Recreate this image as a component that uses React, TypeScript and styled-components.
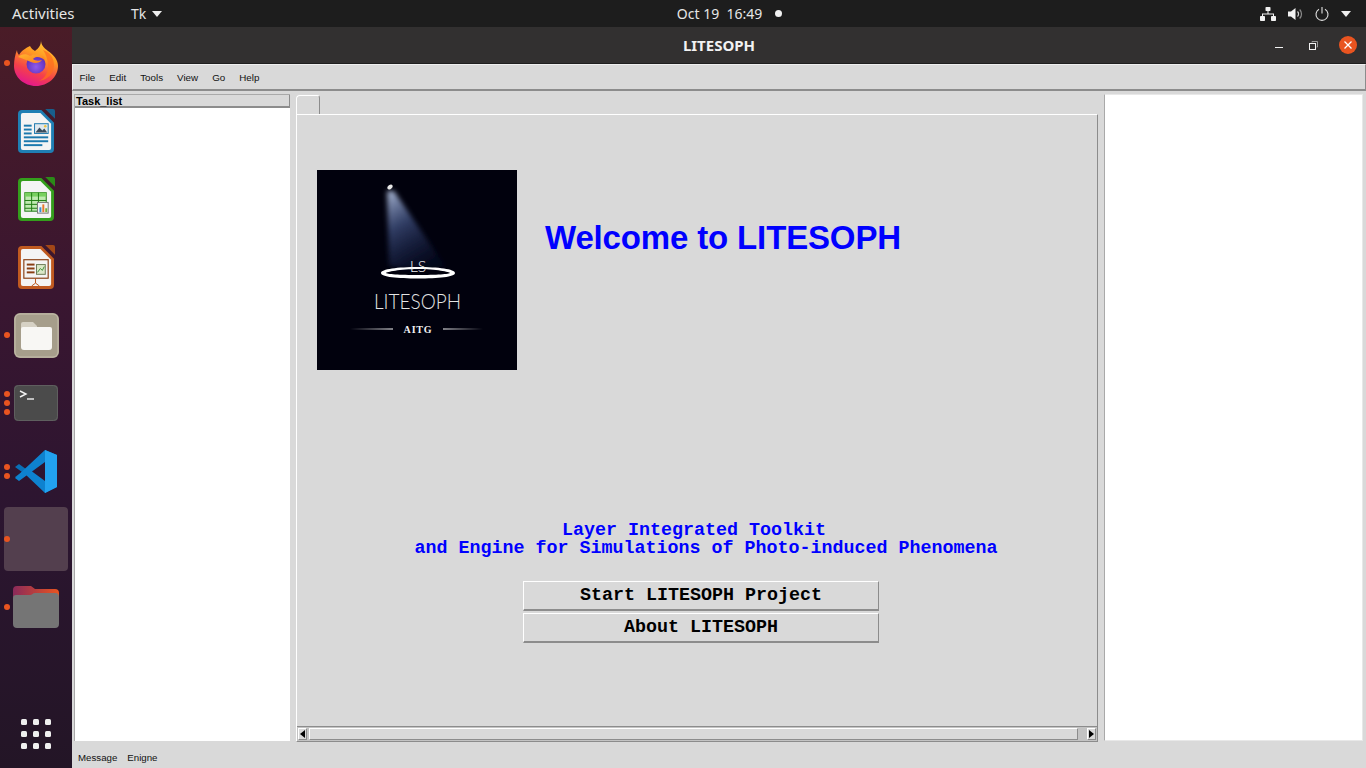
import React from "react";
import styled, { createGlobalStyle } from "styled-components";

const GlobalStyle = createGlobalStyle`
  html, body {
    margin: 0;
    padding: 0;
    width: 1366px;
    height: 768px;
    overflow: hidden;
    background: #d9d9d9;
  }
`;

const Screen = styled.div`
  width: 1366px;
  height: 768px;
  display: grid;
  grid-template-rows: 27px 1fr;
  font-family: "Liberation Sans", sans-serif;
`;

/* gnome top bar */
const TopBar = styled.header`
  background: #1d1d1d;
  color: #e6e6e6;
  display: grid;
  grid-template-columns: 1fr auto 1fr;
  align-items: center;
  font-family: "Noto Sans", sans-serif;
  font-size: 14px;
`;

const TopLeft = styled.div`
  display: flex;
  align-items: center;
  padding-left: 12px;
`;

const Activities = styled.span`
  width: 119px;
  margin-top: -1px;
  font-size: 15px;
`;

const AppMenu = styled.span`
  display: flex;
  align-items: center;
  gap: 6px;
`;

const Clock = styled.div`
  display: flex;
  align-items: center;
  gap: 13px;
  padding-left: 93px;
`;

const ClockDot = styled.span`
  width: 7px;
  height: 7px;
  border-radius: 50%;
  background: #f2f2f2;
`;

const TopRight = styled.div`
  display: flex;
  align-items: center;
  justify-content: flex-end;
  gap: 12px;
  padding-right: 15px;
`;

const Desktop = styled.div`
  display: flex;
  min-height: 0;
`;

/* dock */
const Dock = styled.nav`
  width: 72px;
  flex: none;
  display: flex;
  flex-direction: column;
  padding: 2px 0 19px;
  box-sizing: border-box;
  background: linear-gradient(180deg, #4a1c27 0%, #3a1630 35%, #2c1530 65%, #231526 100%);
`;

const DockItem = styled.div<{ $active?: boolean }>`
  position: relative;
  height: 68px;
  flex: none;
  display: flex;
  align-items: center;
  justify-content: center;
  &::before {
    content: "";
    display: ${(p) => (p.$active ? "block" : "none")};
    position: absolute;
    left: 4px;
    top: 2px;
    width: 64px;
    height: 64px;
    border-radius: 4px;
    background: #533f4e;
  }
`;

const DotStack = styled.div`
  position: absolute;
  left: 4px;
  top: 0;
  bottom: 0;
  display: flex;
  flex-direction: column;
  justify-content: center;
  gap: 3px;
`;

const Dot = styled.span`
  width: 6px;
  height: 6px;
  border-radius: 50%;
  background: #e95420;
`;

const AppGrid = styled.div`
  margin: auto 0 0 21px;
  display: grid;
  grid-template-columns: repeat(3, 6px);
  gap: 6px;
`;

const AppGridDot = styled.span`
  width: 6px;
  height: 6px;
  border-radius: 1.5px;
  background: #efefef;
`;

/* tk window */
const Window = styled.div`
  flex: 1;
  min-width: 0;
  display: flex;
  flex-direction: column;
  background: #d9d9d9;
`;

const TitleBar = styled.div`
  height: 37px;
  flex: none;
  box-sizing: border-box;
  position: relative;
  display: flex;
  align-items: center;
  justify-content: center;
  background: #323030;
  border-bottom: 1px solid #1f1f1f;
  color: #f2f2f2;
  font-family: "Noto Sans", sans-serif;
  font-weight: 700;
  font-size: 15px;
`;

const WindowControls = styled.div`
  position: absolute;
  right: 9px;
  top: 9px;
  display: flex;
  align-items: center;
  gap: 21px;
`;

const MinimizeGlyph = styled.svg`
  margin-right: 5px;
`;

const CloseButton = styled.span`
  width: 18px;
  height: 18px;
  border-radius: 50%;
  background: #e95420;
  display: flex;
  align-items: center;
  justify-content: center;
`;

const MenuBar = styled.div`
  height: 27px;
  flex: none;
  box-sizing: border-box;
  display: flex;
  align-items: center;
  gap: 14px;
  padding: 0 0 0 6.5px;
  border-top: 1px solid #efefef;
  border-left: 1px solid #efefef;
  border-bottom: 2px solid #8c8c8c;
  border-right: 1px solid #8c8c8c;
  font-size: 9.8px;
  color: #111;
`;

const Panes = styled.div`
  flex: 1;
  min-height: 0;
  display: flex;
  gap: 6px;
  padding: 3px 3px 0 2px;
`;

const TaskPane = styled.aside`
  width: 216px;
  flex: none;
  box-sizing: border-box;
  display: flex;
  flex-direction: column;
  border-top: 1px solid #a9a9a9;
  border-left: 1px solid #a9a9a9;
  height: 647px;
`;

const TaskHeader = styled.div`
  height: 13px;
  box-sizing: border-box;
  padding-left: 1px;
  border-bottom: 2px solid #8c8c8c;
  border-right: 1px solid #8c8c8c;
  font-size: 11px;
  font-weight: 700;
  line-height: 12px;
  color: #000;
  background: #d9d9d9;
`;

const TaskBody = styled.div`
  flex: 1;
  background: #fff;
`;

const Notebook = styled.section`
  width: 802px;
  flex: none;
  display: flex;
  flex-direction: column;
  height: 648px;
`;

const Tab = styled.div`
  width: 24px;
  height: 19px;
  margin-top: 1px;
  box-sizing: border-box;
  flex: none;
  border-top: 1px solid #fff;
  border-left: 1px solid #fff;
  border-right: 1px solid #8c8c8c;
  border-top-left-radius: 4px;
  border-top-right-radius: 3px;
`;

const TabPage = styled.div`
  flex: 1;
  min-height: 0;
  display: flex;
  flex-direction: column;
  box-sizing: border-box;
  border-top: 1px solid #fff;
  border-left: 1px solid #fff;
  border-right: 1px solid #8c8c8c;
  border-bottom: 1px solid #8c8c8c;
`;

const PageContent = styled.div`
  flex: 1;
  min-height: 0;
  padding: 55px 0 0 20px;
`;

const Hero = styled.div`
  display: flex;
  align-items: flex-start;
  gap: 28px;
`;

const LogoBox = styled.svg`
  display: block;
  width: 200px;
  height: 200px;
  flex: none;
`;

const Welcome = styled.h1`
  margin: 47px 0 0;
  font-family: "Liberation Sans", sans-serif;
  font-size: 33px;
  line-height: 42px;
  font-weight: 700;
  letter-spacing: -0.15px;
  color: #0000ff;
  white-space: nowrap;
`;

const Tagline = styled.div`
  margin: 152px 0 0 98px;
  width: 582px;
  display: flex;
  flex-direction: column;
  align-items: center;
  font-family: "Liberation Mono", monospace;
  font-size: 18.33px;
  font-weight: 700;
  line-height: 17.5px;
  color: #0000ff;
  white-space: pre;
`;

const TaglineFirst = styled.span`
  padding-right: 24px;
`;

const ButtonStack = styled.div`
  margin: 24px 0 0 206px;
  width: 356px;
  display: flex;
  flex-direction: column;
  gap: 2px;
`;

const TkButton = styled.button`
  height: 30px;
  padding: 0 0 1px;
  box-sizing: border-box;
  background: #d9d9d9;
  border: 1px solid;
  border-color: #fff #8c8c8c #8c8c8c #fff;
  border-bottom-width: 2px;
  border-radius: 0;
  font-family: "Liberation Mono", monospace;
  font-size: 18.33px;
  font-weight: 700;
  color: #000;
`;

const ScrollBar = styled.div`
  height: 15px;
  flex: none;
  box-sizing: border-box;
  display: flex;
  align-items: stretch;
  gap: 2px;
  padding: 1px 1px 1px 1px;
  border-top: 1px solid #8c8c8c;
  background: #c3c3c3;
`;

const ScrollArrow = styled.span`
  width: 9px;
  flex: none;
  display: flex;
  align-items: center;
  justify-content: center;
  background: #d9d9d9;
  border: 1px solid;
  border-color: #fff #8c8c8c #8c8c8c #fff;
  box-sizing: border-box;
`;

const ScrollThumb = styled.span`
  width: 769px;
  flex: none;
  background: #d9d9d9;
  box-sizing: border-box;
  border: 1px solid;
  border-color: #fff #8c8c8c #8c8c8c #fff;
`;

const ScrollTrough = styled.span`
  flex: 1;
`;

const OutputPane = styled.aside`
  width: 259px;
  flex: none;
  height: 647px;
  background: #fff;
  box-sizing: border-box;
  border-top: 1px solid #e8e8e8;
  border-left: 1px solid #a9a9a9;
  border-bottom: 1px solid #e8e8e8;
  border-right: 1px solid #e8e8e8;
`;

const StatusBar = styled.footer`
  height: 26px;
  flex: none;
  display: flex;
  align-items: center;
  gap: 10px;
  padding: 4px 0 0 6px;
  box-sizing: border-box;
  font-size: 9.7px;
  color: #111;
`;

const Caret = () => (
  <svg width="10" height="6" viewBox="0 0 10 6">
    <path d="M0 0h10L5 6z" fill="#eeeeee" />
  </svg>
);

const NetworkIcon = () => (
  <svg width="16" height="14" viewBox="0 0 16 14" fill="#f2f2f2">
    <rect x="5.500" y="0" width="5" height="4" rx="0.8" />
    <rect x="0" y="9" width="5" height="5" rx="0.8" />
    <rect x="11" y="9" width="5" height="5" rx="0.8" />
    <path d="M7.500 4h1v2.500h5.500V9h-1V7.500H3V9H2V6.500h5.500z" />
  </svg>
);

const VolumeIcon = () => (
  <svg width="15" height="14" viewBox="0 0 15 14" fill="none">
    <path d="M0 4.500h3L7.500 1v12L3 9.500H0z" fill="#f2f2f2" />
    <path d="M9.500 4.500a3.500 3.500 0 0 1 0 5" stroke="#d0d0d0" strokeWidth="1.200" />
    <path d="M11.700 2.500a6.500 6.500 0 0 1 0 9" stroke="#8a8a8a" strokeWidth="1.200" />
  </svg>
);

const PowerIcon = () => (
  <svg width="14" height="14" viewBox="0 0 14 14" fill="none" stroke="#e2e2e2" strokeWidth="1.100">
    <path d="M4 2.200a6 6 0 1 0 6 0" />
    <path d="M7 0v6.500" />
  </svg>
);

const FirefoxIcon = () => (
  <svg width="46" height="47" viewBox="0 0 46 47">
    <defs>
      <linearGradient id="ffBody" x1="0.75" y1="0" x2="0.35" y2="1">
        <stop offset="0" stopColor="#ffcf3a" />
        <stop offset="0.35" stopColor="#ff9a22" />
        <stop offset="0.7" stopColor="#f5404a" />
        <stop offset="1" stopColor="#e2178f" />
      </linearGradient>
      <radialGradient id="ffGlobe" cx="0.5" cy="0.65" r="0.6">
        <stop offset="0" stopColor="#8f5bec" />
        <stop offset="1" stopColor="#5b2cb5" />
      </radialGradient>
      <linearGradient id="ffFox" x1="0" y1="0" x2="1" y2="1">
        <stop offset="0" stopColor="#ffb62e" />
        <stop offset="1" stopColor="#ff7a1c" />
      </linearGradient>
    </defs>
    <path
      d="M28 0c0 5 3 8 7 11 6 4 10 9 10 15 0 11-10 20-22 20S1 37 1 26c0-6 1-11 3-16 0 2 1 4 2 5 3-5 7-7 11-9 1 2 3 4 5 5 4-3 6-6 6-11z"
      fill="url(#ffBody)"
    />
    <path d="M30 10c7 2 11 8 11 15 0 8-6 15-15 16 6-3 9-8 9-15 0-6-2-12-5-16z" fill="#ff6d1f" opacity="0.75" />
    <circle cx="23" cy="24" r="9.500" fill="url(#ffGlobe)" />
    <path
      d="M5 17c3-3 8-4 12-1 3-2 7-3 11-1 3 1 4 4 4 6-2-3-5-4-8-4-2 0-3 1-4 2 2 2 6 2 9 1-2 3-7 4-11 2-5-2-9-4-13-5z"
      fill="url(#ffFox)"
    />
  </svg>
);

const DocIcon = ({ edge, corner, children }: { edge: string; corner: string; children: React.ReactNode }) => (
  <svg width="37" height="45" viewBox="0 0 38 46">
    <path d="M4 1h20l13 13v27a4 4 0 0 1-4 4H4a4 4 0 0 1-4-4V5a4 4 0 0 1 4-4z" fill={edge} />
    <path d="M5 4h18l11 11v25a2 2 0 0 1-2 2H5a2 2 0 0 1-2-2V6a2 2 0 0 1 2-2z" fill="#f4f4f4" />
    <path d="M28 0h8a2 2 0 0 1 2 2v8z" fill={corner} />
    {children}
  </svg>
);

const WriterIcon = () => (
  <DocIcon edge="#1f7fb4" corner="#185f8c">
    <g fill="#1c79ae">
      <rect x="6" y="16" width="8" height="2" />
      <rect x="6" y="20" width="8" height="2" />
      <rect x="6" y="24" width="8" height="2" />
      <rect x="6" y="28" width="25" height="2" />
      <rect x="6" y="32" width="25" height="2" />
      <rect x="6" y="36" width="19" height="2" />
    </g>
    <rect x="17" y="15" width="14" height="10" fill="#dfe8ee" stroke="#1c79ae" />
    <path d="M18 24l4-5 3 3 2-2 3 4z" fill="#3a4c5c" />
    <circle cx="28" cy="17.500" r="1.300" fill="#f0c33c" />
  </DocIcon>
);

const CalcIcon = () => (
  <DocIcon edge="#349e1c" corner="#2b8a18">
    <rect x="7" y="16" width="22" height="19" fill="#bfeab0" stroke="#1f7a12" />
    <rect x="7" y="16" width="22" height="4" fill="#78d05f" />
    <path d="M7 24h22M7 28h22M7 32h22M14 16v19M21 16v19" stroke="#1f7a12" fill="none" />
    <rect x="20" y="26" width="11" height="11" fill="#f2f2f2" stroke="#777" />
    <rect x="22" y="31" width="2" height="5" fill="#3a8fd0" />
    <rect x="25" y="28" width="2" height="8" fill="#e9782a" />
    <rect x="28" y="32" width="2" height="4" fill="#72b13c" />
  </DocIcon>
);

const ImpressIcon = () => (
  <DocIcon edge="#c05a20" corner="#a24717">
    <rect x="6" y="15" width="25" height="19" fill="#f4f4f4" stroke="#8a3f14" strokeWidth="1.200" />
    <rect x="9" y="19" width="8" height="2" fill="#8a3f14" />
    <rect x="9" y="23" width="8" height="2" fill="#8a3f14" />
    <rect x="9" y="27" width="8" height="2" fill="#8a3f14" />
    <rect x="19" y="20" width="9" height="10" fill="#dbe8c8" stroke="#6b7a55" />
    <path d="M20 28l3-4 2 2 2-4" stroke="#3f8f3a" fill="none" />
    <path d="M18 34v5M18 39l-4 3M18 39l4 3" stroke="#b9531a" fill="none" />
  </DocIcon>
);

const FilesIcon = () => (
  <svg width="45" height="45" viewBox="0 0 45 45">
    <rect width="45" height="45" rx="6" fill="#a69e8b" />
    <rect x="1" y="1" width="43" height="43" rx="5" fill="none" stroke="#c5beac" />
    <path d="M7 11a2 2 0 0 1 2-2h10l4 4v6H7z" fill="#d6d1c4" />
    <path d="M7 16a2 2 0 0 1 2-2h27a2 2 0 0 1 2 2v18a3 3 0 0 1-3 3H10a3 3 0 0 1-3-3z" fill="#f8f7f4" />
  </svg>
);

const TerminalIcon = () => (
  <svg width="44" height="36" viewBox="0 0 44 36">
    <rect width="44" height="36" rx="4" fill="#4b4b4b" />
    <rect x="0.500" y="0.500" width="43" height="35" rx="4" fill="none" stroke="#5f5f5f" />
    <path d="M6 6l6 3-6 3" fill="none" stroke="#f2f2f2" strokeWidth="1.400" />
    <path d="M13 14h7" stroke="#f2f2f2" strokeWidth="1.400" />
  </svg>
);

const VsCodeIcon = () => (
  <svg width="44" height="43" viewBox="0 0 44 43">
    <path d="M1 17l4-3 11 8-11 8-4-3 7-5z" fill="#0a6fb5" />
    <path d="M31 0l12 5v32l-12 6L11 24l5-4 15 11V12L5 31l-4-3z" fill="#0e82cf" />
    <path d="M31 0l12 5v32l-12 6z" fill="#22a2ef" />
  </svg>
);

const FolderIcon = () => (
  <svg width="46" height="42" viewBox="0 0 46 42">
    <defs>
      <linearGradient id="folderTop" x1="0" y1="0" x2="1" y2="0">
        <stop offset="0" stopColor="#8a2a5a" />
        <stop offset="1" stopColor="#e95420" />
      </linearGradient>
    </defs>
    <path d="M0 4a4 4 0 0 1 4-4h14l4 3h20a4 4 0 0 1 4 4v12H0z" fill="url(#folderTop)" />
    <path
      d="M0 12a3 3 0 0 1 3-3h14c2 0 3-2 5-2h20a4 4 0 0 1 4 4v27a4 4 0 0 1-4 4H4a4 4 0 0 1-4-4z"
      fill="#757575"
    />
  </svg>
);

const LiteSophLogo = () => (
  <LogoBox viewBox="0 0 200 200">
    <defs>
      <linearGradient id="beam" x1="0.15" y1="0" x2="0.6" y2="1">
        <stop offset="0" stopColor="#a9b8d8" stopOpacity="0.9" />
        <stop offset="0.4" stopColor="#4f649c" stopOpacity="0.6" />
        <stop offset="1" stopColor="#142355" stopOpacity="0.2" />
      </linearGradient>
      <linearGradient id="lineL" x1="0" y1="0" x2="1" y2="0">
        <stop offset="0" stopColor="#fff" stopOpacity="0" />
        <stop offset="1" stopColor="#fff" />
      </linearGradient>
      <linearGradient id="lineR" x1="0" y1="0" x2="1" y2="0">
        <stop offset="0" stopColor="#fff" />
        <stop offset="1" stopColor="#fff" stopOpacity="0" />
      </linearGradient>
      <filter id="soft" x="-30%" y="-10%" width="160%" height="120%">
        <feGaussianBlur stdDeviation="2.500" />
      </filter>
    </defs>
    <rect width="200" height="200" fill="#01010d" />
    <path d="M70 21 L77 21 L128 96 Q100 102 72 96 Z" fill="url(#beam)" filter="url(#soft)" />
    <ellipse cx="73" cy="17" rx="3" ry="2" fill="#e8e8e8" transform="rotate(-35 73 17)" />
    <path
      d="M64 103c0-4 17-6 37-6s37 2 37 6-17 5.500-37 5.500-37-1.500-37-5.500zm5 0c0 1 14 2 32 2s32-1 32-2-14-4-32-4-32 3-32 4z"
      fill="#fff"
      fillRule="evenodd"
    />
    <text
      x="101"
      y="102"
      textAnchor="middle"
      fontFamily="Lato, sans-serif"
      fontWeight="300"
      fontSize="16"
      fill="#eeeeee"
    >
      LS
    </text>
    <text
      x="57"
      y="139"
      textLength="87"
      lengthAdjust="spacingAndGlyphs"
      fontFamily="Lato, sans-serif"
      fontWeight="300"
      fontSize="21"
      fill="#e4e4e4"
    >
      LITESOPH
    </text>
    <rect x="33" y="158.500" width="43" height="1" fill="url(#lineL)" />
    <rect x="126" y="158.500" width="40" height="1" fill="url(#lineR)" />
    <text
      x="101"
      y="163"
      textAnchor="middle"
      fontFamily="'Liberation Serif', serif"
      fontWeight="700"
      fontSize="10"
      letterSpacing="0.800"
      fill="#f2f2f2"
    >
      AITG
    </text>
  </LogoBox>
);

const dockApps = [
  { icon: <FirefoxIcon />, dots: 1 },
  { icon: <WriterIcon />, dots: 0 },
  { icon: <CalcIcon />, dots: 0 },
  { icon: <ImpressIcon />, dots: 0 },
  { icon: <FilesIcon />, dots: 1 },
  { icon: <TerminalIcon />, dots: 3 },
  { icon: <VsCodeIcon />, dots: 2 },
  { icon: null, dots: 1, active: true },
  { icon: <FolderIcon />, dots: 1 },
];

const menus = ["File", "Edit", "Tools", "View", "Go", "Help"];

export default function App() {
  return (
    <Screen>
      <GlobalStyle />
      <TopBar>
        <TopLeft>
          <Activities>Activities</Activities>
          <AppMenu>
            Tk <Caret />
          </AppMenu>
        </TopLeft>
        <Clock>
          <span>Oct 19&nbsp;&nbsp;16:49</span>
          <ClockDot />
        </Clock>
        <TopRight>
          <NetworkIcon />
          <VolumeIcon />
          <PowerIcon />
          <Caret />
        </TopRight>
      </TopBar>
      <Desktop>
        <Dock>
          {dockApps.map((app, i) => (
            <DockItem key={i} $active={app.active}>
              {app.dots > 0 && (
                <DotStack>
                  {Array.from({ length: app.dots }).map((_, d) => (
                    <Dot key={d} />
                  ))}
                </DotStack>
              )}
              {app.icon}
            </DockItem>
          ))}
          <AppGrid>
            {Array.from({ length: 9 }).map((_, i) => (
              <AppGridDot key={i} />
            ))}
          </AppGrid>
        </Dock>
        <Window>
          <TitleBar>
            LITESOPH
            <WindowControls>
              <MinimizeGlyph width="8" height="6" viewBox="0 0 8 6">
                <rect y="5" width="8" height="1" fill="#f2f2f2" />
              </MinimizeGlyph>
              <svg width="9" height="9" viewBox="0 0 9 9" fill="none">
                <path d="M3 1.500V.5h5.500V6H7.500" stroke="#9a9a9a" />
                <rect x="0.500" y="2.500" width="6" height="6" stroke="#f2f2f2" />
              </svg>
              <CloseButton>
                <svg width="8" height="8" viewBox="0 0 8 8">
                  <path d="M.5.5l7 7M7.500.5l-7 7" stroke="#fff" strokeWidth="1.300" />
                </svg>
              </CloseButton>
            </WindowControls>
          </TitleBar>
          <MenuBar>
            {menus.map((m) => (
              <span key={m}>{m}</span>
            ))}
          </MenuBar>
          <Panes>
            <TaskPane>
              <TaskHeader>Task_list</TaskHeader>
              <TaskBody />
            </TaskPane>
            <Notebook>
              <Tab />
              <TabPage>
                <PageContent>
                  <Hero>
                    <LiteSophLogo />
                    <Welcome>Welcome to LITESOPH</Welcome>
                  </Hero>
                  <Tagline>
                    <TaglineFirst>Layer Integrated Toolkit</TaglineFirst>
                    <span>and Engine for Simulations of Photo-induced Phenomena</span>
                  </Tagline>
                  <ButtonStack>
                    <TkButton>Start LITESOPH Project</TkButton>
                    <TkButton>About LITESOPH</TkButton>
                  </ButtonStack>
                </PageContent>
                <ScrollBar>
                  <ScrollArrow>
                    <svg width="5" height="8" viewBox="0 0 5 8">
                      <path d="M5 0v8L0 4z" fill="#000" />
                    </svg>
                  </ScrollArrow>
                  <ScrollThumb />
                  <ScrollTrough />
                  <ScrollArrow>
                    <svg width="5" height="8" viewBox="0 0 5 8">
                      <path d="M0 0v8l5-4z" fill="#000" />
                    </svg>
                  </ScrollArrow>
                </ScrollBar>
              </TabPage>
            </Notebook>
            <OutputPane />
          </Panes>
          <StatusBar>
            <span>Message</span>
            <span>Enigne</span>
          </StatusBar>
        </Window>
      </Desktop>
    </Screen>
  );
}
